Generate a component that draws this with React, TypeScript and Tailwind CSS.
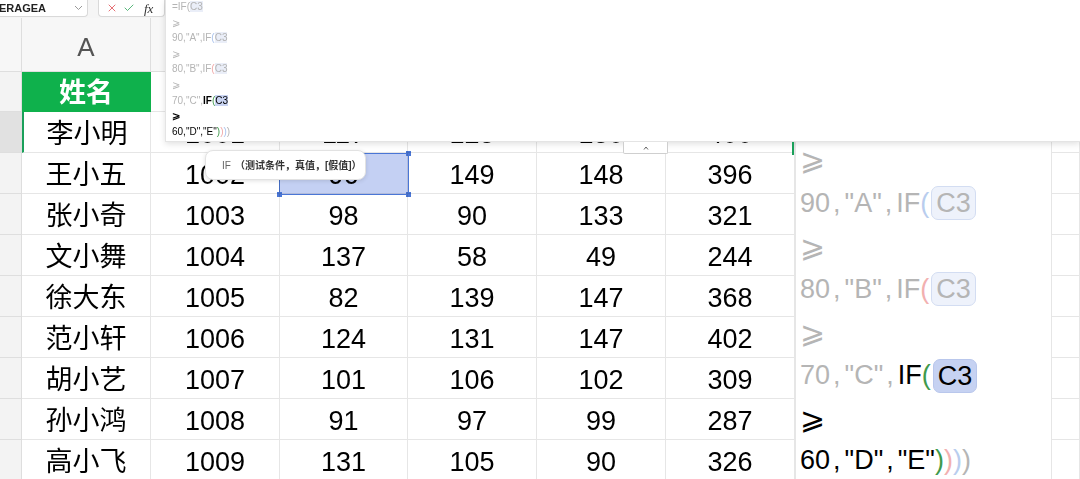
import { Check, X } from 'lucide-react';

const COLS = ['w-[129px]', 'w-[129px]', 'w-[128px]', 'w-[129px]', 'w-[129px]', 'w-[129px]', 'w-[129px]', 'w-[128px]', 'flex-1'];

const rows = [
  ['李小明', '1001', '117', '123', '130', '400'],
  ['王小五', '1002', '96', '149', '148', '396'],
  ['张小奇', '1003', '98', '90', '133', '321'],
  ['文小舞', '1004', '137', '58', '49', '244'],
  ['徐大东', '1005', '82', '139', '147', '368'],
  ['范小轩', '1006', '124', '131', '147', '402'],
  ['胡小艺', '1007', '101', '106', '102', '309'],
  ['孙小鸿', '1008', '91', '97', '99', '287'],
  ['高小飞', '1009', '131', '105', '90', '326'],
];

const GE = '⩾';

// token C3 inside the small formula bar
function BarRef({ active }: { active?: boolean }) {
  return <span className={active ? 'bg-[#c9d4f2] text-black' : 'bg-[#eaeef8]'}>C3</span>;
}

// token C3 inside the in-cell editor
function CellRef({ active }: { active?: boolean }) {
  return (
    <span
      className={`ml-[2px] rounded-[7px] border px-[4px] leading-[32px] ${
        active ? 'border-[#b9c7ec] bg-[#c6d2f2] text-black' : 'border-[#d3ddf2] bg-[#eef2fb] text-[#b5b5b5]'
      }`}
    >
      C3
    </span>
  );
}

function Comma() {
  return <span className="ml-[3px] mr-[4px]">,</span>;
}

function FormulaBar() {
  return (
    <div className="absolute left-[165px] right-0 top-0 h-[142px] border-b border-l border-[#e4e4e4] bg-white pl-[6px] shadow-[0_2px_6px_rgba(0,0,0,0.12)]">
      <div className="-mt-[1px] text-[10px] leading-[15.6px] text-[#b4b4b4]">
        <div>
          =IF(<BarRef />
        </div>
        <div>{GE}</div>
        <div>
          90,"A",IF<span className="text-[#a9c2ec]">(</span>
          <BarRef />
        </div>
        <div>{GE}</div>
        <div>
          80,"B",IF<span className="text-[#f0a9a9]">(</span>
          <BarRef />
        </div>
        <div>{GE}</div>
        <div>
          70,"C",<span className="font-bold text-black">IF</span>
          <span className="text-[#3f9a4c]">(</span>
          <BarRef active />
        </div>
        <div className="font-bold text-black">{GE}</div>
        <div className="text-black">
          60,"D","E"<span className="text-[#3f9a4c]">)</span>
          <span className="text-[#f0a9a9]">)</span>
          <span className="text-[#a9c2ec]">)</span>
          <span className="text-[#b4b4b4]">)</span>
        </div>
      </div>
    </div>
  );
}

function CellEditor() {
  return (
    <div className="absolute left-[795px] top-[95px] h-[400px] w-[257px] border-x border-[#e6e6e6] bg-white pl-[4px] text-[27px] text-[#b5b5b5]">
      <div className="flex h-[43px] items-center">=IF(C3</div>
      <div className="flex h-[43px] items-center font-['DejaVu_Sans',sans-serif] text-[30px] font-light">{GE}</div>
      <div className="flex h-[44px] items-center">
        90<Comma />"A"<Comma />IF<span className="text-[#b9cdee]">(</span>
        <CellRef />
      </div>
      <div className="flex h-[42px] items-center font-['DejaVu_Sans',sans-serif] text-[30px] font-light">{GE}</div>
      <div className="flex h-[44px] items-center">
        80<Comma />"B"<Comma />IF<span className="text-[#f2b0b0]">(</span>
        <CellRef />
      </div>
      <div className="flex h-[42px] items-center font-['DejaVu_Sans',sans-serif] text-[30px] font-light">{GE}</div>
      <div className="flex h-[45px] items-center">
        70<Comma />"C"<Comma />
        <span className="text-black">IF</span>
        <span className="text-[#3f9a4c]">(</span>
        <CellRef active />
      </div>
      <div className="flex h-[41px] items-center font-['DejaVu_Sans',sans-serif] text-[30px] font-light text-black">{GE}</div>
      <div className="flex h-[43px] items-center text-black">
        60<Comma />"D"<Comma />"E"<span className="text-[#3f9a4c]">)</span>
        <span className="text-[#f2b0b0]">)</span>
        <span className="text-[#b9cdee]">)</span>
        <span className="text-[#b5b5b5]">)</span>
      </div>
    </div>
  );
}

export default function App() {
  return (
    <div className="relative h-[479px] w-[1080px] overflow-hidden bg-white font-['Liberation_Sans','Noto_Sans_CJK_SC',sans-serif]">
      {/* toolbar */}
      <div className="flex h-[18px] items-start bg-[#f5f5f5]">
        <div className="flex h-[17px] w-[88px] items-center justify-between rounded-br-[4px] border-b border-r border-[#d9d9d9] bg-white pr-[4px] text-[11px] font-bold text-[#222]">
          <span className="-ml-[1px]">ERAGEA</span>
          <svg width="9" height="6" viewBox="0 0 9 6" fill="none" stroke="#9a9a9a" strokeWidth="1">
            <path d="M1 1l3.5 3.5L8 1" />
          </svg>
        </div>
        <div className="ml-[10px] flex h-[17px] w-[67px] items-center gap-[5px] rounded-b-[4px] border-x border-b border-[#d9d9d9] bg-white pl-[7px]">
          <X size={12} strokeWidth={1.6} color="#e04b52" />
          <Check size={12} strokeWidth={1.6} color="#2fa45a" />
          <span className="ml-[4px] font-['Liberation_Serif',serif] text-[13px] italic leading-none text-[#333]">fx</span>
        </div>
      </div>

      {/* column header */}
      <div className="flex h-[54px] bg-[#f7f7f7]">
        <div className="w-[22px] shrink-0 border-b border-r border-[#dedede]" />
        {COLS.map((c, i) => (
          <div key={i} className={`${c} flex shrink-0 items-center justify-center border-b border-r border-[#dedede] pt-[5px] text-[26px] text-[#555]`}>
            {i === 0 ? 'A' : ''}
          </div>
        ))}
      </div>

      {/* title row */}
      <div className="flex h-[40px]">
        <div className="w-[22px] shrink-0 border-b border-r border-[#dedede] bg-[#f3f3f3]" />
        {COLS.map((c, i) => (
          <div
            key={i}
            className={`${c} flex shrink-0 items-center justify-center border-b border-r pt-[3px] text-[27px] font-bold ${
              i === 0 ? 'border-[#0fb14c] bg-[#0fb14c] text-white' : 'border-[#e6e6e6] bg-white'
            }`}
          >
            {i === 0 ? '姓名' : ''}
          </div>
        ))}
      </div>

      {/* data rows */}
      {rows.map((r, ri) => (
        <div key={ri} className="flex h-[41px]">
          <div className={`w-[22px] shrink-0 border-b border-r border-[#dedede] ${ri === 0 ? 'bg-[#e1e1e1]' : 'bg-[#f3f3f3]'}`} />
          {COLS.map((c, i) => (
            <div
              key={i}
              className={`${c} flex shrink-0 items-center justify-center border-b border-r border-[#e6e6e6] pt-[4px] text-[27px] text-black ${
                ri === 0 && i === 0 ? 'border-l-2 border-l-[#1aa05a]' : ''
              }`}
            >
              {r[i] ?? ''}
            </div>
          ))}
        </div>
      ))}

      {/* selected cell C3 */}
      <div className="absolute left-[279px] top-[153px] h-[42px] w-[130px] border-[1.5px] border-[#4a76d6] bg-[#c4d0f3] mix-blend-multiply">
        <span className="absolute -left-[3px] -top-[3px] h-[5px] w-[5px] bg-[#4a76d6]" />
        <span className="absolute -right-[3px] -top-[3px] h-[5px] w-[5px] bg-[#4a76d6]" />
        <span className="absolute -bottom-[3px] -left-[3px] h-[5px] w-[5px] bg-[#4a76d6]" />
        <span className="absolute -bottom-[3px] -right-[3px] h-[5px] w-[5px] bg-[#4a76d6]" />
      </div>

      <CellEditor />
      <FormulaBar />

      {/* collapse toggle */}
      <div className="absolute left-[623px] top-[142px] flex h-[12px] w-[45px] items-center justify-center rounded-b-[2px] border border-t-0 border-[#cfcfcf] bg-white">
        <svg width="6" height="4" viewBox="0 0 6 4" fill="none" stroke="#555" strokeWidth="0.9">
          <path d="M1 3.5L3 1l2 2.5" />
        </svg>
      </div>

      {/* caret */}
      <div className="absolute left-[792px] top-[142px] h-[13px] w-[2px] bg-[#1aa05a]" />

      {/* function hint */}
      <div className="absolute left-[205px] top-[150px] flex h-[30px] w-[161px] items-center rounded-[8px] border border-[#e2e2e2] bg-white pl-[16px] text-[10px] shadow-[0_1px_4px_rgba(0,0,0,0.12)]">
        <span className="text-[#666]">IF</span>
        <span className="ml-[4px] font-bold text-[#333]">（测试条件，真值，[假值]）</span>
      </div>
    </div>
  );
}
